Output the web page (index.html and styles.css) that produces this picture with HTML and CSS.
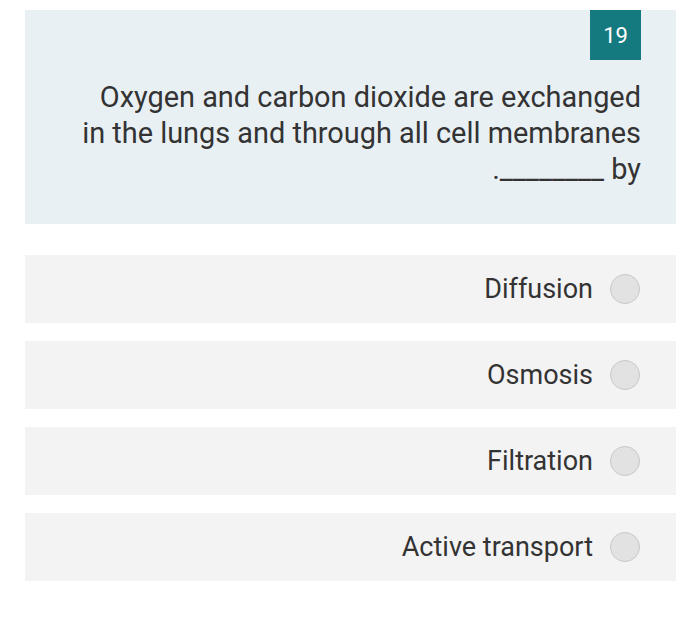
FILE: index.html
```
<!DOCTYPE html>
<html>
<head>
<meta charset="utf-8">
<link rel="stylesheet" href="styles.css">
</head>
<body>
<div class="page">
  <div class="question">
    <div class="badge-row"><span class="badge">19</span></div>
    <p class="qtext">Oxygen and carbon dioxide are exchanged<br>in the lungs and through all cell membranes<br>.________ by</p>
  </div>
  <div class="options">
    <div class="option"><span class="label">Diffusion</span><span class="radio"></span></div>
    <div class="option"><span class="label">Osmosis</span><span class="radio"></span></div>
    <div class="option"><span class="label">Filtration</span><span class="radio"></span></div>
    <div class="option"><span class="label">Active transport</span><span class="radio"></span></div>
  </div>
</div>
</body>
</html>
```
FILE: styles.css
```
html, body {
  margin: 0;
  padding: 0;
  background: #ffffff;
}
body {
  font-family: Roboto, "Liberation Sans", sans-serif;
  color: #333333;
}
.page {
  width: 651px;
  margin: 10px 0 0 25px;
}
.question {
  background: #e9f0f3;
  padding: 0 35px 37px 20px;
}
.badge-row {
  display: flex;
  justify-content: flex-end;
}
.badge {
  width: 51px;
  height: 50px;
  background: #147a80;
  color: #ffffff;
  font-size: 22px;
  display: flex;
  align-items: center;
  justify-content: center;
}
.qtext {
  margin: 19px 0 0 0;
  font-size: 28.9px;
  line-height: 36px;
  text-align: right;
  white-space: nowrap;
}
.options {
  margin-top: 31px;
  display: flex;
  flex-direction: column;
  gap: 18px;
}
.option {
  height: 68px;
  background: #f3f3f3;
  display: flex;
  align-items: center;
  justify-content: flex-end;
  padding-right: 36px;
  gap: 17px;
}
.label {
  font-size: 27px;
  color: #333333;
}
.radio {
  width: 28px;
  height: 28px;
  border-radius: 50%;
  background: #e2e2e2;
  border: 1px solid #c8c8c8;
}
```
